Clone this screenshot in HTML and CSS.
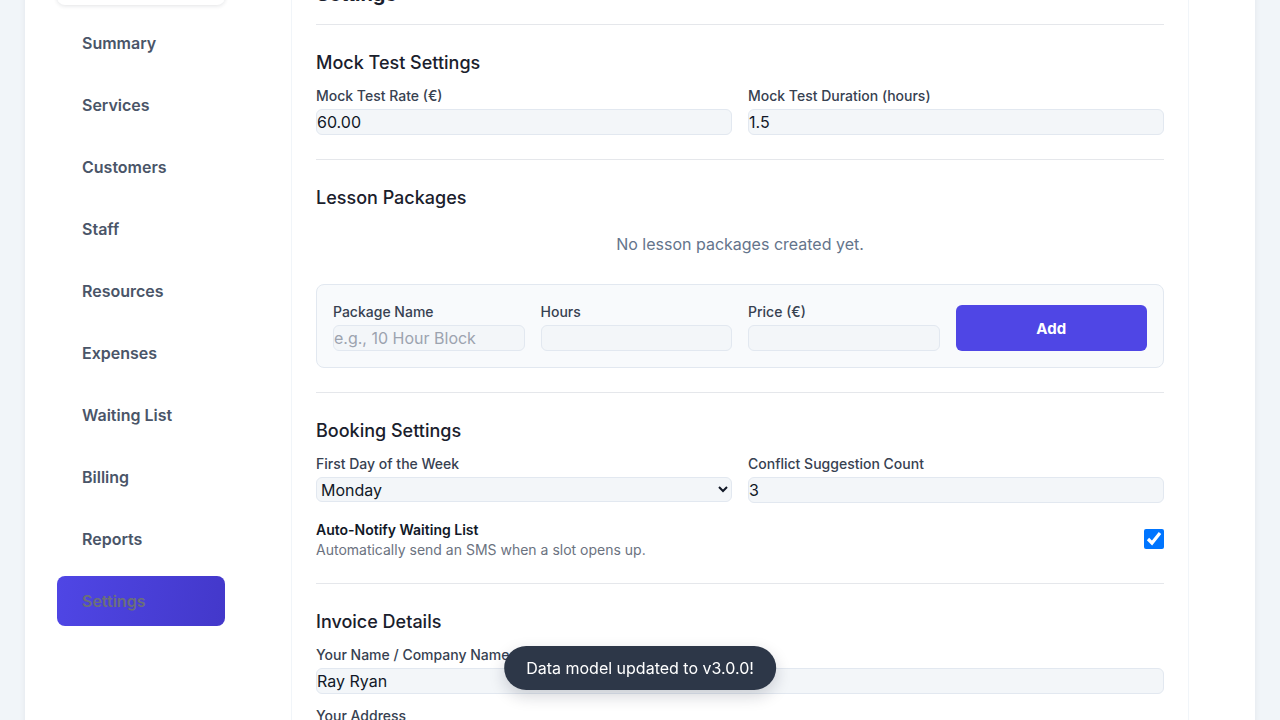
FILE: index.html
```html
<!DOCTYPE html>
<html lang="en">
<head>
<meta charset="utf-8">
<title>Settings</title>
<link rel="stylesheet" href="styles.css">
</head>
<body>
<div class="app">
  <aside class="sidebar">
    <div class="brand-card"></div>
    <nav class="nav">
      <a class="nav-item">Summary</a>
      <a class="nav-item">Services</a>
      <a class="nav-item">Customers</a>
      <a class="nav-item">Staff</a>
      <a class="nav-item">Resources</a>
      <a class="nav-item">Expenses</a>
      <a class="nav-item">Waiting List</a>
      <a class="nav-item">Billing</a>
      <a class="nav-item">Reports</a>
      <a class="nav-item active">Settings</a>
    </nav>
  </aside>

  <main class="main">
    <h1 class="page-title">Settings</h1>

    <section class="section">
      <h2 class="section-title">Mock Test Settings</h2>
      <div class="grid-2">
        <div class="field">
          <label class="label">Mock Test Rate (€)</label>
          <input class="input" type="text" value="60.00">
        </div>
        <div class="field">
          <label class="label">Mock Test Duration (hours)</label>
          <input class="input" type="text" value="1.5">
        </div>
      </div>
    </section>

    <section class="section">
      <h2 class="section-title">Lesson Packages</h2>
      <p class="empty">No lesson packages created yet.</p>
      <div class="package-card">
        <div class="field">
          <label class="label">Package Name</label>
          <input class="input" type="text" placeholder="e.g., 10 Hour Block">
        </div>
        <div class="field">
          <label class="label">Hours</label>
          <input class="input" type="text">
        </div>
        <div class="field">
          <label class="label">Price (€)</label>
          <input class="input" type="text">
        </div>
        <button class="btn-add" type="button">Add</button>
      </div>
    </section>

    <section class="section">
      <h2 class="section-title">Booking Settings</h2>
      <div class="grid-2">
        <div class="field">
          <label class="label">First Day of the Week</label>
          <select class="input select">
            <option>Monday</option>
            <option>Sunday</option>
          </select>
        </div>
        <div class="field">
          <label class="label">Conflict Suggestion Count</label>
          <input class="input" type="text" value="3">
        </div>
      </div>
      <div class="toggle-row">
        <div class="toggle-text">
          <div class="toggle-title">Auto-Notify Waiting List</div>
          <div class="toggle-desc">Automatically send an SMS when a slot opens up.</div>
        </div>
        <input class="checkbox" type="checkbox" checked>
      </div>
    </section>

    <section class="section">
      <h2 class="section-title">Invoice Details</h2>
      <div class="stack">
        <div class="field">
          <label class="label">Your Name / Company Name</label>
          <input class="input" type="text" value="Ray Ryan">
        </div>
        <div class="field">
          <label class="label">Your Address</label>
          <textarea class="input textarea"></textarea>
        </div>
      </div>
    </section>
  </main>
  <div class="gutter"></div>
</div>

<div class="toast">Data model updated to v3.0.0!</div>
</body>
</html>
```
FILE: styles.css
```css
* { box-sizing: border-box; }

html, body {
  height: 720px;
  overflow: hidden;
}

body {
  margin: 0;
  background: #f1f5f9;
  font-family: Inter, "Noto Sans", sans-serif;
  color: #1f2937;
}

.app {
  margin: -46px 25px 0;
  background: #ffffff;
  display: grid;
  grid-template-columns: 267px 897px 1fr;
  min-height: 900px;
  box-shadow: 0 0 6px rgba(15, 23, 42, 0.07);
}

/* Sidebar */
.sidebar {
  border-right: 1px solid #f1f5f9;
  padding: 11px 66px 0 32px;
}

.brand-card {
  height: 40px;
  background: #ffffff;
  border-radius: 8px;
  box-shadow: 0 1px 4px rgba(15, 23, 42, 0.12);
  margin-bottom: 13px;
}

.nav {
  display: flex;
  flex-direction: column;
  gap: 12px;
}

.nav-item {
  display: flex;
  align-items: center;
  height: 50px;
  padding-left: 25px;
  border-radius: 8px;
  font-size: 16px;
  font-weight: 600;
  color: #4a5568;
}

.nav-item.active {
  background: linear-gradient(100deg, #4f46e5 0%, #4338ca 100%);
  color: #6b6f7a;
}

/* Main */
.main {
  border-right: 1px solid #f1f5f9;
  padding: 24px;
}

.page-title {
  margin: 2px 0 0;
  font-size: 20px;
  line-height: 28px;
  font-weight: 700;
  color: #1a202c;
  padding-bottom: 16px;
  border-bottom: 1px solid #e5e7eb;
}

.section {
  padding: 24px 0;
  border-bottom: 1px solid #e5e7eb;
}

.section-title {
  margin: 0 0 9px;
  font-size: 18px;
  line-height: 28px;
  font-weight: 500;
  color: #1a202c;
}

.grid-2 {
  display: grid;
  grid-template-columns: 1fr 1fr;
  gap: 16px;
}

.stack {
  display: flex;
  flex-direction: column;
  gap: 12px;
}

.field {
  display: flex;
  flex-direction: column;
}

.label {
  font-size: 14px;
  line-height: 20px;
  font-weight: 500;
  color: #374151;
  margin-bottom: 3px;
}

.input {
  height: 26px;
  width: 100%;
  padding: 0;
  border: 1px solid #e2e8f0;
  border-radius: 6px;
  background: #f3f6f9;
  font-family: Inter, "Noto Sans", sans-serif;
  font-size: 16px;
  color: #111827;
  outline: none;
}

.input::placeholder {
  color: #9ca3af;
}

.select {
  height: 25px;
}

.textarea {
  height: 60px;
  resize: none;
}

.empty {
  margin: 20px 0 28px;
  text-align: center;
  font-size: 16px;
  line-height: 24px;
  color: #64748b;
}

.package-card {
  display: grid;
  grid-template-columns: repeat(4, 1fr);
  gap: 16px;
  padding: 17px 16px 16px;
  background: #f8fafc;
  border: 1px solid #e2e8f0;
  border-radius: 8px;
}

.btn-add {
  align-self: end;
  height: 46px;
  border: none;
  border-radius: 6px;
  background: #4f46e5;
  color: #ffffff;
  font-family: Inter, "Noto Sans", sans-serif;
  font-size: 15px;
  font-weight: 700;
}

.toggle-row {
  margin-top: 17px;
  display: flex;
  align-items: center;
  justify-content: space-between;
}

.toggle-title {
  font-size: 14px;
  line-height: 20px;
  font-weight: 600;
  color: #111827;
}

.toggle-desc {
  font-size: 14px;
  line-height: 19px;
  color: #6b7280;
}

.checkbox {
  width: 20px;
  height: 20px;
  margin: 0 0 1px;
}

/* Toast */
.toast {
  position: fixed;
  left: 50%;
  bottom: 30px;
  transform: translateX(-50%);
  height: 44px;
  padding: 0 22px;
  display: flex;
  align-items: center;
  border-radius: 9999px;
  background: #2d3748;
  color: #ffffff;
  font-size: 16px;
  white-space: nowrap;
  box-shadow: 0 6px 16px rgba(15, 23, 42, 0.18);
}
```
